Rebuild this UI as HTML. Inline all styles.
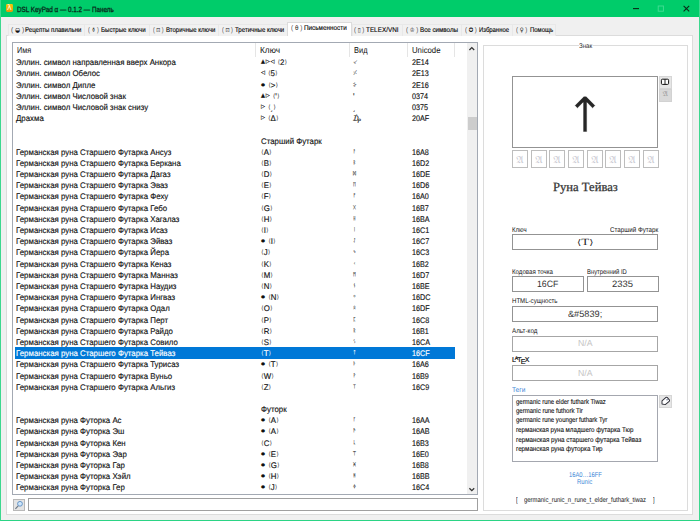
<!DOCTYPE html>
<html lang="ru">
<head>
<meta charset="utf-8">
<title>DSL KeyPad α — 0.1.2 — Панель</title>
<style>
html,body{margin:0;padding:0}
body{width:700px;height:521px;overflow:hidden;background:#f0f0f0;position:relative;
  font-family:"Liberation Sans","DejaVu Sans",sans-serif;font-size:7px;color:#111;text-rendering:geometricPrecision}
*{box-sizing:border-box}
.abs,.t{position:absolute}
.t{white-space:nowrap;transform-origin:0 50%;line-height:12px;height:12px;z-index:5}
i{font-style:normal}
/* window frame */
#frame{position:absolute;left:0;top:0;width:700px;height:521px;border:1px solid #3dd88f;border-top:none;border-bottom:1.5px solid #2bd485;pointer-events:none;z-index:9}
#titlebar{position:absolute;left:0;top:0;width:700px;height:17px;background:#00cc6a}
#appicon{position:absolute;left:5.6px;top:4px;width:7.4px;height:8.2px;border-radius:1.4px;background:linear-gradient(#f7c808,#e3950c)}
#appicon b{position:absolute;left:1.3px;top:-1.2px;font-size:8px;line-height:10px;color:#fffbe6;font-weight:normal;font-family:"DejaVu Sans",sans-serif}
/* tabs */
.tab{position:absolute;top:24px;height:12px;border:1px solid #e8e8e8;border-bottom:none;background:#f1f1f1}
.tab.on{top:22px;height:14px;background:#fff;border-color:#dcdcdc;z-index:3}
.ic{font-family:"DejaVu Sans",sans-serif;font-size:6.2px;color:#111;line-height:0}
#panel{position:absolute;left:6px;top:35px;width:687px;height:480px;background:#fff;border:1px solid #dcdcdc}
/* list view */
#list{position:absolute;left:12px;top:42px;width:466px;height:453px;background:#fff;border:1px solid #a3a9b3;overflow:hidden}
#rows{position:absolute;left:-13px;top:-43px;width:480px;height:521px}
.hd{position:absolute;top:43px;height:14px;border-right:1px solid #e5e5e5}
.row{position:absolute;left:15px;width:439.5px;height:11.19px;font-size:8.2px;-webkit-text-stroke:.14px currentColor}
.row span{position:absolute;top:0.8px;white-space:nowrap;line-height:11.2px;height:11.19px;transform-origin:0 50%;transform:scaleX(.96)}
.row.sel{background:#0078d7;color:#fff}
.c1{left:.7px}.c2{left:245.5px}.c3{left:338px;color:#222}.c4{left:396.5px;transform:scaleX(.882) !important}
.rn{font-size:5px;color:#444;font-family:"DejaVu Sans",sans-serif}
.pn{font-size:6.5px;color:#555}
.row.sel .c3{color:#fff}
.m{font-family:"DejaVu Sans",sans-serif;font-size:5.4px;letter-spacing:.8px;margin-right:2.2px;display:inline-block;vertical-align:top;line-height:10.4px}
.m.d{font-size:4.8px;line-height:12px;margin-right:2.4px;transform:scaleY(.9)}
.b{font-family:"DejaVu Sans",sans-serif;font-size:5.8px;color:#555;display:inline-block;vertical-align:top;line-height:12.4px;margin:0 .3px}
.row.sel .b{color:#dbe9f8}
#sb{position:absolute;left:467px;top:43px;width:10px;height:451px;background:#f0f0f0}
#thumb{position:absolute;left:467.5px;top:117px;width:9px;height:13px;background:#cdcdcd}
/* search */
#sbtn{position:absolute;left:13px;top:499px;width:12px;height:12px;background:#e4e4e4;border:1px solid #b8b8b8}
#sinp{position:absolute;left:28px;top:498px;width:450px;height:13px;background:#fff;border:1px solid #a0a0a0}
/* right group */
#grp{position:absolute;left:483px;top:45px;width:205px;height:466px;border:1px solid #dcdcdc}
.box{position:absolute;background:#fff;border:1px solid #939393}
.btn{position:absolute;width:12.5px;height:12.5px;background:#e6e6e6;border:1px solid #d6d6d6}
.alt{position:absolute;top:150px;width:16px;height:18px;border:1px solid #bdbdbd;background:#fff;color:#c9c9d2;text-align:center;font-family:"DejaVu Math TeX Gyre","DejaVu Serif",serif;font-size:9px;line-height:19.5px}
</style>
</head>
<body>
<div id="titlebar"></div>
<div id="appicon"><b>λ</b></div>
<svg class="abs" style="left:560px;top:0" width="140" height="18" viewBox="0 0 140 18">
  <path d="M73 8.6h6" stroke="#0a2a18" stroke-width="1.1" fill="none"/>
  <rect x="98.2" y="6" width="5.2" height="5.2" stroke="#45dc95" stroke-width=".9" fill="none"/>
  <path d="M123.6 5.8l5.6 5.6M129.2 5.8l-5.6 5.6" stroke="#0a2a18" stroke-width="1.1" fill="none"/>
</svg>

<div id="panel"></div>
<div class="tab" style="left:7.5px;width:77px"></div>
<div class="tab" style="left:83.5px;width:66px"></div>
<div class="tab" style="left:148.5px;width:70px"></div>
<div class="tab" style="left:217.5px;width:70px"></div>
<div class="tab on" style="left:286.5px;width:65.5px"></div>
<div class="tab" style="left:351.5px;width:51px"></div>
<div class="tab" style="left:401.5px;width:60px"></div>
<div class="tab" style="left:460.5px;width:52px"></div>
<div class="tab" style="left:511.5px;width:44.5px"></div>

<div id="list">
 <div id="rows">
  <div class="hd" style="left:13px;width:243px"></div>
  <div class="hd" style="left:256px;width:94px"></div>
  <div class="hd" style="left:350px;width:58px"></div>
  <div class="hd" style="left:408px;width:47px"></div>
<div class="row" style="top:56.40px"><span class="c1">Эллин. символ направленная вверх Анкора</span><span class="c2"><i class="m">▲▷◁</i><i class="b">⟨</i>2<i class="b">⟩</i></span><span class="c3 pn">⸔</span><span class="c4">2E14</span></div>
<div class="row" style="top:67.59px"><span class="c1">Эллин. символ Обелос</span><span class="c2"><i class="m">◁</i><i class="b">⟨</i>5<i class="b">⟩</i></span><span class="c3 pn">⸓</span><span class="c4">2E13</span></div>
<div class="row" style="top:78.78px"><span class="c1">Эллин. символ Дипле</span><span class="c2"><i class="m d">●</i><i class="b">⟨</i>&gt;<i class="b">⟩</i></span><span class="c3 pn">⸖</span><span class="c4">2E16</span></div>
<div class="row" style="top:89.97px"><span class="c1">Эллин. символ Числовой знак</span><span class="c2"><i class="m">▲▷</i><i class="b">⟨</i>ʹ<i class="b">⟩</i></span><span class="c3">ʹ</span><span class="c4">0374</span></div>
<div class="row" style="top:101.16px"><span class="c1">Эллин. символ Числовой знак снизу</span><span class="c2"><i class="m">▷</i><i class="b">⟨</i>͵<i class="b">⟩</i></span><span class="c3">͵</span><span class="c4">0375</span></div>
<div class="row" style="top:112.35px"><span class="c1">Драхма</span><span class="c2"><i class="m">▷</i><i class="b">⟨</i>Δ<i class="b">⟩</i></span><span class="c3">₯</span><span class="c4">20AF</span></div>
<div class="row" style="top:134.73px"><span class="c2 grp">Старший Футарк</span></div>
<div class="row" style="top:145.92px"><span class="c1">Германская руна Старшего Футарка Ансуз</span><span class="c2"><i class="b">⟨</i>A<i class="b">⟩</i></span><span class="c3 rn">ᚨ</span><span class="c4">16A8</span></div>
<div class="row" style="top:157.11px"><span class="c1">Германская руна Старшего Футарка Беркана</span><span class="c2"><i class="b">⟨</i>B<i class="b">⟩</i></span><span class="c3 rn">ᛒ</span><span class="c4">16D2</span></div>
<div class="row" style="top:168.30px"><span class="c1">Германская руна Старшего Футарка Дагаз</span><span class="c2"><i class="b">⟨</i>D<i class="b">⟩</i></span><span class="c3 rn">ᛞ</span><span class="c4">16DE</span></div>
<div class="row" style="top:179.49px"><span class="c1">Германская руна Старшего Футарка Эваз</span><span class="c2"><i class="b">⟨</i>E<i class="b">⟩</i></span><span class="c3 rn">ᛖ</span><span class="c4">16D6</span></div>
<div class="row" style="top:190.68px"><span class="c1">Германская руна Старшего Футарка Феху</span><span class="c2"><i class="b">⟨</i>F<i class="b">⟩</i></span><span class="c3 rn">ᚠ</span><span class="c4">16A0</span></div>
<div class="row" style="top:201.87px"><span class="c1">Германская руна Старшего Футарка Гебо</span><span class="c2"><i class="b">⟨</i>G<i class="b">⟩</i></span><span class="c3 rn">ᚷ</span><span class="c4">16B7</span></div>
<div class="row" style="top:213.06px"><span class="c1">Германская руна Старшего Футарка Хагалаз</span><span class="c2"><i class="b">⟨</i>H<i class="b">⟩</i></span><span class="c3 rn">ᚺ</span><span class="c4">16BA</span></div>
<div class="row" style="top:224.25px"><span class="c1">Германская руна Старшего Футарка Исаз</span><span class="c2"><i class="b">⟨</i>I<i class="b">⟩</i></span><span class="c3 rn">ᛁ</span><span class="c4">16C1</span></div>
<div class="row" style="top:235.44px"><span class="c1">Германская руна Старшего Футарка Эйваз</span><span class="c2"><i class="m d">●</i><i class="b">⟨</i>I<i class="b">⟩</i></span><span class="c3 rn">ᛇ</span><span class="c4">16C7</span></div>
<div class="row" style="top:246.63px"><span class="c1">Германская руна Старшего Футарка Йера</span><span class="c2"><i class="b">⟨</i>J<i class="b">⟩</i></span><span class="c3 rn">ᛃ</span><span class="c4">16C3</span></div>
<div class="row" style="top:257.82px"><span class="c1">Германская руна Старшего Футарка Кеназ</span><span class="c2"><i class="b">⟨</i>K<i class="b">⟩</i></span><span class="c3 rn">ᚲ</span><span class="c4">16B2</span></div>
<div class="row" style="top:269.01px"><span class="c1">Германская руна Старшего Футарка Манназ</span><span class="c2"><i class="b">⟨</i>M<i class="b">⟩</i></span><span class="c3 rn">ᛗ</span><span class="c4">16D7</span></div>
<div class="row" style="top:280.20px"><span class="c1">Германская руна Старшего Футарка Наудиз</span><span class="c2"><i class="b">⟨</i>N<i class="b">⟩</i></span><span class="c3 rn">ᚾ</span><span class="c4">16BE</span></div>
<div class="row" style="top:291.39px"><span class="c1">Германская руна Старшего Футарка Ингваз</span><span class="c2"><i class="m d">●</i><i class="b">⟨</i>N<i class="b">⟩</i></span><span class="c3 rn">ᛜ</span><span class="c4">16DC</span></div>
<div class="row" style="top:302.58px"><span class="c1">Германская руна Старшего Футарка Одал</span><span class="c2"><i class="b">⟨</i>O<i class="b">⟩</i></span><span class="c3 rn">ᛟ</span><span class="c4">16DF</span></div>
<div class="row" style="top:313.77px"><span class="c1">Германская руна Старшего Футарка Перт</span><span class="c2"><i class="b">⟨</i>P<i class="b">⟩</i></span><span class="c3 rn">ᛈ</span><span class="c4">16C8</span></div>
<div class="row" style="top:324.96px"><span class="c1">Германская руна Старшего Футарка Райдо</span><span class="c2"><i class="b">⟨</i>R<i class="b">⟩</i></span><span class="c3 rn">ᚱ</span><span class="c4">16B1</span></div>
<div class="row" style="top:336.15px"><span class="c1">Германская руна Старшего Футарка Совило</span><span class="c2"><i class="b">⟨</i>S<i class="b">⟩</i></span><span class="c3 rn">ᛊ</span><span class="c4">16CA</span></div>
<div class="row sel" style="top:347.34px"><span class="c1">Германская руна Старшего Футарка Тейваз</span><span class="c2"><i class="b">⟨</i>T<i class="b">⟩</i></span><span class="c3 rn">ᛏ</span><span class="c4">16CF</span></div>
<div class="row" style="top:358.53px"><span class="c1">Германская руна Старшего Футарка Турисаз</span><span class="c2"><i class="m d">●</i><i class="b">⟨</i>T<i class="b">⟩</i></span><span class="c3 rn">ᚦ</span><span class="c4">16A6</span></div>
<div class="row" style="top:369.72px"><span class="c1">Германская руна Старшего Футарка Вуньо</span><span class="c2"><i class="b">⟨</i>W<i class="b">⟩</i></span><span class="c3 rn">ᚹ</span><span class="c4">16B9</span></div>
<div class="row" style="top:380.91px"><span class="c1">Германская руна Старшего Футарка Альгиз</span><span class="c2"><i class="b">⟨</i>Z<i class="b">⟩</i></span><span class="c3 rn">ᛉ</span><span class="c4">16C9</span></div>
<div class="row" style="top:403.29px"><span class="c2 grp">Футорк</span></div>
<div class="row" style="top:414.48px"><span class="c1">Германская руна Футорка Ас</span><span class="c2"><i class="m d">●</i><i class="b">⟨</i>A<i class="b">⟩</i></span><span class="c3 rn">ᚪ</span><span class="c4">16AA</span></div>
<div class="row" style="top:425.67px"><span class="c1">Германская руна Футорка Эш</span><span class="c2"><i class="m d">●</i><i class="b">⟨</i>A<i class="b">⟩</i></span><span class="c3 rn">ᚫ</span><span class="c4">16AB</span></div>
<div class="row" style="top:436.86px"><span class="c1">Германская руна Футорка Кен</span><span class="c2"><i class="b">⟨</i>C<i class="b">⟩</i></span><span class="c3 rn">ᚳ</span><span class="c4">16B3</span></div>
<div class="row" style="top:448.05px"><span class="c1">Германская руна Футорка Эар</span><span class="c2"><i class="m d">●</i><i class="b">⟨</i>E<i class="b">⟩</i></span><span class="c3 rn">ᛠ</span><span class="c4">16E0</span></div>
<div class="row" style="top:459.24px"><span class="c1">Германская руна Футорка Гар</span><span class="c2"><i class="m d">●</i><i class="b">⟨</i>G<i class="b">⟩</i></span><span class="c3 rn">ᚸ</span><span class="c4">16B8</span></div>
<div class="row" style="top:470.43px"><span class="c1">Германская руна Футорка Хэйл</span><span class="c2"><i class="m d">●</i><i class="b">⟨</i>H<i class="b">⟩</i></span><span class="c3 rn">ᚻ</span><span class="c4">16BB</span></div>
<div class="row" style="top:481.62px"><span class="c1">Германская руна Футорка Гер</span><span class="c2"><i class="m d">●</i><i class="b">⟨</i>J<i class="b">⟩</i></span><span class="c3 rn">ᛄ</span><span class="c4">16C4</span></div>
 </div>
</div>
<div id="sb"></div><div id="thumb"></div>
<svg class="abs" style="left:467px;top:43px" width="9.5" height="451" viewBox="0 0 9.5 451">
  <path d="M2.4 7l2.4-2.4 2.4 2.4" stroke="#333" stroke-width="1.3" fill="none"/>
  <path d="M2.4 445.3l2.4 2.4 2.4-2.4" stroke="#333" stroke-width="1.3" fill="none"/>
</svg>
<div id="sbtn"><svg width="10" height="10" viewBox="0 0 10 10" style="position:absolute;left:0;top:0"><circle cx="6" cy="3.8" r="2.4" fill="#cfe6fb" stroke="#5b8fc4" stroke-width=".9"/><path d="M4.2 5.8L1.4 8.8" stroke="#6b7785" stroke-width="1.2"/></svg></div>
<div id="sinp"></div>

<div id="grp"></div>

<!-- preview -->
<div class="box" style="left:512px;top:76px;width:146px;height:72px"></div>
<div class="abs" id="rune" style="left:512px;top:76px;width:146px;height:71.5px;text-align:center;font-family:'DejaVu Sans',sans-serif;font-weight:normal;-webkit-text-stroke:.55px #fff;font-size:49px;line-height:79px;color:#262626">↑</div>
<div class="btn" style="left:659px;top:76px"><svg width="10" height="10" viewBox="0 0 10 10" style="position:absolute;left:0;top:0"><rect x="1.4" y="2.2" width="7.2" height="5.2" rx="1" fill="#fff" stroke="#111" stroke-width="1"/><path d="M5 2.2v5.4" stroke="#111" stroke-width=".9"/></svg></div>
<div class="btn" style="left:659px;top:89px;background:#d9d9d9;border-color:#d2d2d2;color:#999;font-family:'DejaVu Math TeX Gyre','DejaVu Serif',serif;font-size:6.5px;line-height:10px;text-align:center">𝔄</div>
<div class="alt" style="left:512px">𝔄</div><div class="alt" style="left:531px">𝔄</div><div class="alt" style="left:549px">𝔄</div><div class="alt" style="left:568px">𝔄</div><div class="alt" style="left:587px">𝔄</div><div class="alt" style="left:605px">𝔄</div><div class="alt" style="left:624px">𝔄</div><div class="alt" style="left:643px">𝔄</div>

<div class="box" style="left:512px;top:234px;width:146px;height:16px"></div>
<div class="box" style="left:512px;top:276px;width:72px;height:16px"></div>
<div class="box" style="left:587px;top:276px;width:72px;height:16px"></div>
<div class="box" style="left:512px;top:306px;width:146px;height:16px"></div>
<div class="box" style="left:512px;top:336px;width:146px;height:16px;border-color:#a6a6a6"></div>
<div class="box" style="left:512px;top:365px;width:146px;height:16px;border-color:#a6a6a6"></div>
<div class="box" style="left:512px;top:395px;width:146px;height:67px;border-color:#a4a7af"></div>
<div class="btn" style="left:659px;top:395px"><svg width="10" height="10" viewBox="0 0 10 10" style="position:absolute;left:0;top:0"><g transform="translate(5.3 5.3) rotate(-40)"><path d="M-4.3 0L-2.2-2.5H3a1 1 0 0 1 1 1v3a1 1 0 0 1-1 1H-2.2z" fill="#fff" stroke="#2e2e38" stroke-width=".95" stroke-linejoin="round"/><circle cx="2.3" cy="0" r=".7" fill="#5a6a8a"/></g></svg></div>

<div class="t" style="left:17.00px;top:4px;font-family:'Liberation Sans','DejaVu Sans',sans-serif;font-size:7.6px;color:#08281a;transform:scaleX(0.8304);-webkit-text-stroke:.3px #08281a;">DSL KeyPad α — 0.1.2 — Панель</div>
<div class="t" style="left:10.80px;top:25px;font-family:'Liberation Sans','DejaVu Sans',sans-serif;font-size:7px;color:#4a4a4a;transform:scaleX(0.9534);">( <i class='ic'>◒</i> )</div>
<div class="t" style="left:24.60px;top:25px;font-family:'Liberation Sans','DejaVu Sans',sans-serif;font-size:7px;color:#000;transform:scaleX(0.8681);-webkit-text-stroke:.12px #000;">Рецепты плавильни</div>
<div class="t" style="left:88.00px;top:25px;font-family:'Liberation Sans','DejaVu Sans',sans-serif;font-size:7px;color:#4a4a4a;transform:scaleX(0.7896);">( <i class='ic'>⚱</i> )</div>
<div class="t" style="left:101.00px;top:25px;font-family:'Liberation Sans','DejaVu Sans',sans-serif;font-size:7px;color:#000;transform:scaleX(0.8748);-webkit-text-stroke:.12px #000;">Быстрые ключи</div>
<div class="t" style="left:153.00px;top:25px;font-family:'Liberation Sans','DejaVu Sans',sans-serif;font-size:7px;color:#4a4a4a;transform:scaleX(0.7619);">( <i class='ic'>⊡</i> )</div>
<div class="t" style="left:165.60px;top:25px;font-family:'Liberation Sans','DejaVu Sans',sans-serif;font-size:7px;color:#000;transform:scaleX(0.8587);-webkit-text-stroke:.12px #000;">Вторичные ключи</div>
<div class="t" style="left:222.00px;top:25px;font-family:'Liberation Sans','DejaVu Sans',sans-serif;font-size:7px;color:#4a4a4a;transform:scaleX(0.7896);">( <i class='ic'>⊡</i> )</div>
<div class="t" style="left:235.00px;top:25px;font-family:'Liberation Sans','DejaVu Sans',sans-serif;font-size:7px;color:#000;transform:scaleX(0.8658);-webkit-text-stroke:.12px #000;">Третичные ключи</div>
<div class="t" style="left:291.00px;top:23px;font-family:'Liberation Sans','DejaVu Sans',sans-serif;font-size:7px;color:#4a4a4a;transform:scaleX(0.9212);">( <i class='ic'>θ</i> )</div>
<div class="t" style="left:304.00px;top:23px;font-family:'Liberation Sans','DejaVu Sans',sans-serif;font-size:7px;color:#000;transform:scaleX(0.9076);-webkit-text-stroke:.12px #000;">Письменности</div>
<div class="t" style="left:353.70px;top:25px;font-family:'Liberation Sans','DejaVu Sans',sans-serif;font-size:7px;color:#4a4a4a;transform:scaleX(0.8614);">( <i class='ic'>▯</i> )</div>
<div class="t" style="left:366.00px;top:25px;font-family:'Liberation Sans','DejaVu Sans',sans-serif;font-size:7px;color:#000;transform:scaleX(0.9079);-webkit-text-stroke:.12px #000;">TELEX/VNI</div>
<div class="t" style="left:405.60px;top:25px;font-family:'Liberation Sans','DejaVu Sans',sans-serif;font-size:7px;color:#4a4a4a;transform:scaleX(0.8623);">( <i class='ic'>♔</i> )</div>
<div class="t" style="left:420.00px;top:25px;font-family:'Liberation Sans','DejaVu Sans',sans-serif;font-size:7px;color:#000;transform:scaleX(0.8892);-webkit-text-stroke:.12px #000;">Все символы</div>
<div class="t" style="left:465.00px;top:25px;font-family:'Liberation Sans','DejaVu Sans',sans-serif;font-size:7px;color:#4a4a4a;transform:scaleX(0.8589);">( <i class='ic'>✪</i> )</div>
<div class="t" style="left:479.00px;top:25px;font-family:'Liberation Sans','DejaVu Sans',sans-serif;font-size:7px;color:#000;transform:scaleX(0.8454);-webkit-text-stroke:.12px #000;">Избранное</div>
<div class="t" style="left:516.00px;top:25px;font-family:'Liberation Sans','DejaVu Sans',sans-serif;font-size:7px;color:#4a4a4a;transform:scaleX(0.8615);">( <i class='ic'>♀</i> )</div>
<div class="t" style="left:529.50px;top:25px;font-family:'Liberation Sans','DejaVu Sans',sans-serif;font-size:7px;color:#000;transform:scaleX(0.8504);-webkit-text-stroke:.12px #000;">Помощь</div>
<div class="t" style="left:16.60px;top:44px;font-family:'Liberation Sans','DejaVu Sans',sans-serif;font-size:8.6px;transform:scaleX(0.8478);">Имя</div>
<div class="t" style="left:260.00px;top:44px;font-family:'Liberation Sans','DejaVu Sans',sans-serif;font-size:8.6px;transform:scaleX(0.9631);">Ключ</div>
<div class="t" style="left:353.50px;top:44px;font-family:'Liberation Sans','DejaVu Sans',sans-serif;font-size:8.6px;transform:scaleX(0.8683);">Вид</div>
<div class="t" style="left:411.50px;top:44px;font-family:'Liberation Sans','DejaVu Sans',sans-serif;font-size:8.6px;transform:scaleX(0.9039);">Unicode</div>
<div class="t" style="left:579.20px;top:41px;font-family:'Liberation Sans','DejaVu Sans',sans-serif;font-size:6.8px;color:#222;transform:scaleX(0.9026);background:#fff;">Знак</div>
<div class="t" style="left:553.20px;top:181px;font-family:'Liberation Serif','DejaVu Serif',serif;font-size:12.6px;color:#333;transform:scaleX(1.0020);-webkit-text-stroke:.25px #333;">Руна Тейваз</div>
<div class="t" style="left:512.00px;top:225px;font-family:'Liberation Sans','DejaVu Sans',sans-serif;font-size:6.9px;transform:scaleX(0.8765);">Ключ</div>
<div class="t" style="left:609.80px;top:225px;font-family:'Liberation Sans','DejaVu Sans',sans-serif;font-size:6.9px;transform:scaleX(0.9041);">Старший Футарк</div>
<div class="t" style="left:576.90px;top:237px;font-family:'Liberation Serif','DejaVu Serif',serif;font-size:9.5px;color:#222;transform:scaleX(1.3596);"><i style="font-family:'DejaVu Serif',serif;font-size:8px;line-height:0">⟨</i>T<i style="font-family:'DejaVu Serif',serif;font-size:8px;line-height:0">⟩</i></div>
<div class="t" style="left:512.00px;top:267px;font-family:'Liberation Sans','DejaVu Sans',sans-serif;font-size:6.9px;transform:scaleX(0.8897);">Кодовая точка</div>
<div class="t" style="left:587.40px;top:267px;font-family:'Liberation Sans','DejaVu Sans',sans-serif;font-size:6.9px;transform:scaleX(0.8508);">Внутренний ID</div>
<div class="t" style="left:537.40px;top:278px;font-family:'Liberation Sans','DejaVu Sans',sans-serif;font-size:9.2px;color:#333;transform:scaleX(0.9524);">16CF</div>
<div class="t" style="left:612.40px;top:278px;font-family:'Liberation Sans','DejaVu Sans',sans-serif;font-size:9.2px;color:#333;transform:scaleX(1.0316);">2335</div>
<div class="t" style="left:512.00px;top:296px;font-family:'Liberation Sans','DejaVu Sans',sans-serif;font-size:6.9px;transform:scaleX(0.8843);">HTML-сущность</div>
<div class="t" style="left:568.00px;top:308px;font-family:'Liberation Sans','DejaVu Sans',sans-serif;font-size:9.2px;color:#333;transform:scaleX(0.9990);">&amp;#5839;</div>
<div class="t" style="left:512.00px;top:326px;font-family:'Liberation Sans','DejaVu Sans',sans-serif;font-size:6.9px;transform:scaleX(0.9097);">Альт-код</div>
<div class="t" style="left:577.90px;top:337px;font-family:'Liberation Sans','DejaVu Sans',sans-serif;font-size:8.8px;color:#c4c4c4;transform:scaleX(0.9883);">N/A</div>
<div class="t" style="left:512.40px;top:355px;font-family:'Liberation Sans','DejaVu Sans',sans-serif;font-size:7px;color:#111;transform:scaleX(0.9978);-webkit-text-stroke:.2px #111;">L<span style='font-size:5.2px;position:relative;top:-2.1px;margin-left:-1.2px;margin-right:-.9px'>A</span>T<span style='position:relative;top:1.5px;margin-left:-.9px;margin-right:-.6px'>E</span>X</div>
<div class="t" style="left:577.90px;top:367px;font-family:'Liberation Sans','DejaVu Sans',sans-serif;font-size:8.8px;color:#c4c4c4;transform:scaleX(0.9883);">N/A</div>
<div class="t" style="left:512.00px;top:385px;font-family:'Liberation Sans','DejaVu Sans',sans-serif;font-size:6.9px;color:#3c86d6;transform:scaleX(0.9479);">Теги</div>
<div class="t" style="left:516.00px;top:397px;font-family:'Liberation Sans','DejaVu Sans',sans-serif;font-size:6.9px;color:#0a0a0a;transform:scaleX(0.8652);-webkit-text-stroke:.1px #111;">germanic rune elder futhark Tiwaz</div>
<div class="t" style="left:516.00px;top:406px;font-family:'Liberation Sans','DejaVu Sans',sans-serif;font-size:6.9px;color:#0a0a0a;transform:scaleX(0.8720);-webkit-text-stroke:.1px #111;">germanic rune futhork Tir</div>
<div class="t" style="left:516.00px;top:415px;font-family:'Liberation Sans','DejaVu Sans',sans-serif;font-size:6.9px;color:#0a0a0a;transform:scaleX(0.8669);-webkit-text-stroke:.1px #111;">germanic rune younger futhark Tyr</div>
<div class="t" style="left:516.00px;top:425px;font-family:'Liberation Sans','DejaVu Sans',sans-serif;font-size:6.9px;color:#0a0a0a;transform:scaleX(0.8975);-webkit-text-stroke:.1px #111;">германская руна младшего футарка Тюр</div>
<div class="t" style="left:516.00px;top:435px;font-family:'Liberation Sans','DejaVu Sans',sans-serif;font-size:6.9px;color:#0a0a0a;transform:scaleX(0.9114);-webkit-text-stroke:.1px #111;">германская руна старшего футарка Тейваз</div>
<div class="t" style="left:516.00px;top:444px;font-family:'Liberation Sans','DejaVu Sans',sans-serif;font-size:6.9px;color:#0a0a0a;transform:scaleX(0.9065);-webkit-text-stroke:.1px #111;">германская руна футорка Тир</div>
<div class="t" style="left:568.70px;top:470px;font-family:'Liberation Sans','DejaVu Sans',sans-serif;font-size:6.9px;color:#3c86d6;transform:scaleX(0.8419);">16A0…16FF</div>
<div class="t" style="left:577.20px;top:477px;font-family:'Liberation Sans','DejaVu Sans',sans-serif;font-size:6.9px;color:#3c86d6;transform:scaleX(0.8624);">Runic</div>
<div class="t" style="left:516.00px;top:495px;font-family:'Liberation Sans','DejaVu Sans',sans-serif;font-size:6.9px;transform:scaleX(0.8325);">[</div>
<div class="t" style="left:524.30px;top:495px;font-family:'Liberation Sans','DejaVu Sans',sans-serif;font-size:6.9px;transform:scaleX(0.8608);">germanic_runic_n_rune_t_elder_futhark_tiwaz</div>
<div class="t" style="left:653.40px;top:495px;font-family:'Liberation Sans','DejaVu Sans',sans-serif;font-size:6.9px;transform:scaleX(0.8325);">]</div>
<div id="frame"></div>
</body>
</html>
